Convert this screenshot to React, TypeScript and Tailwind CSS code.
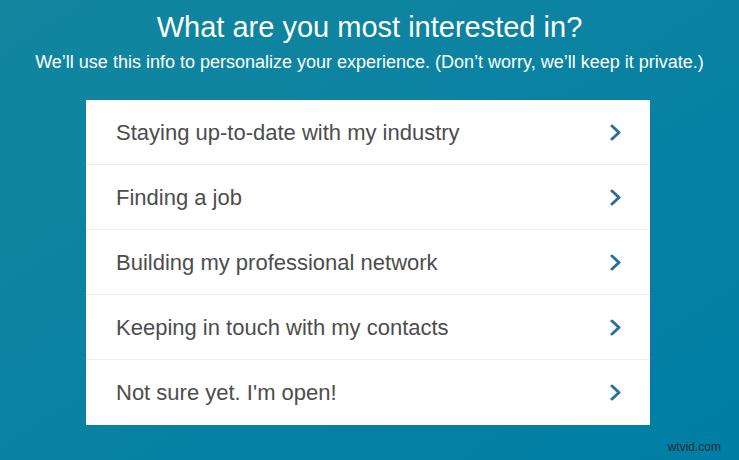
const options = [
  'Staying up-to-date with my industry',
  'Finding a job',
  'Building my professional network',
  'Keeping in touch with my contacts',
  "Not sure yet. I'm open!",
];

const Chevron = () => (
  <svg width="12" height="17" viewBox="0 0 12 17" fill="none">
    <path d="M2 2 L9 8.5 L2 15" stroke="#2c6f9b" strokeWidth="3" strokeLinecap="round" strokeLinejoin="round" />
  </svg>
);

const App = () => {
  return (
    <div className="relative w-[739px] h-[460px] overflow-hidden bg-gradient-to-br from-[#12869f] to-[#007ea5] font-['Liberation_Sans',Arial,sans-serif]">
      <div className="flex flex-col items-center pt-[10px]">
        <h1 className="text-white text-[29px] leading-[34px]">
          What are you most interested in?
        </h1>
        <p className="text-white text-[18px] leading-[22px] mt-[7px]">
          We’ll use this info to personalize your experience. (Don’t worry, we’ll keep it private.)
        </p>
      </div>
      <div className="ml-[86px] mt-[27px] w-[564px] bg-white flex flex-col">
        {options.map((label, i) => (
          <div
            key={label}
            className={
              'h-[65px] flex items-center justify-between pl-[30px] pr-[28px] ' +
              (i < options.length - 1 ? 'border-b border-[#ececec]' : '')
            }
          >
            <span className="text-[#4d4d4d] text-[22px]">{label}</span>
            <Chevron />
          </div>
        ))}
      </div>
      <div className="absolute right-[18px] bottom-[4px] text-[#1c2b36] text-[12px]">
        wtvid.com
      </div>
    </div>
  );
};

export default App;
